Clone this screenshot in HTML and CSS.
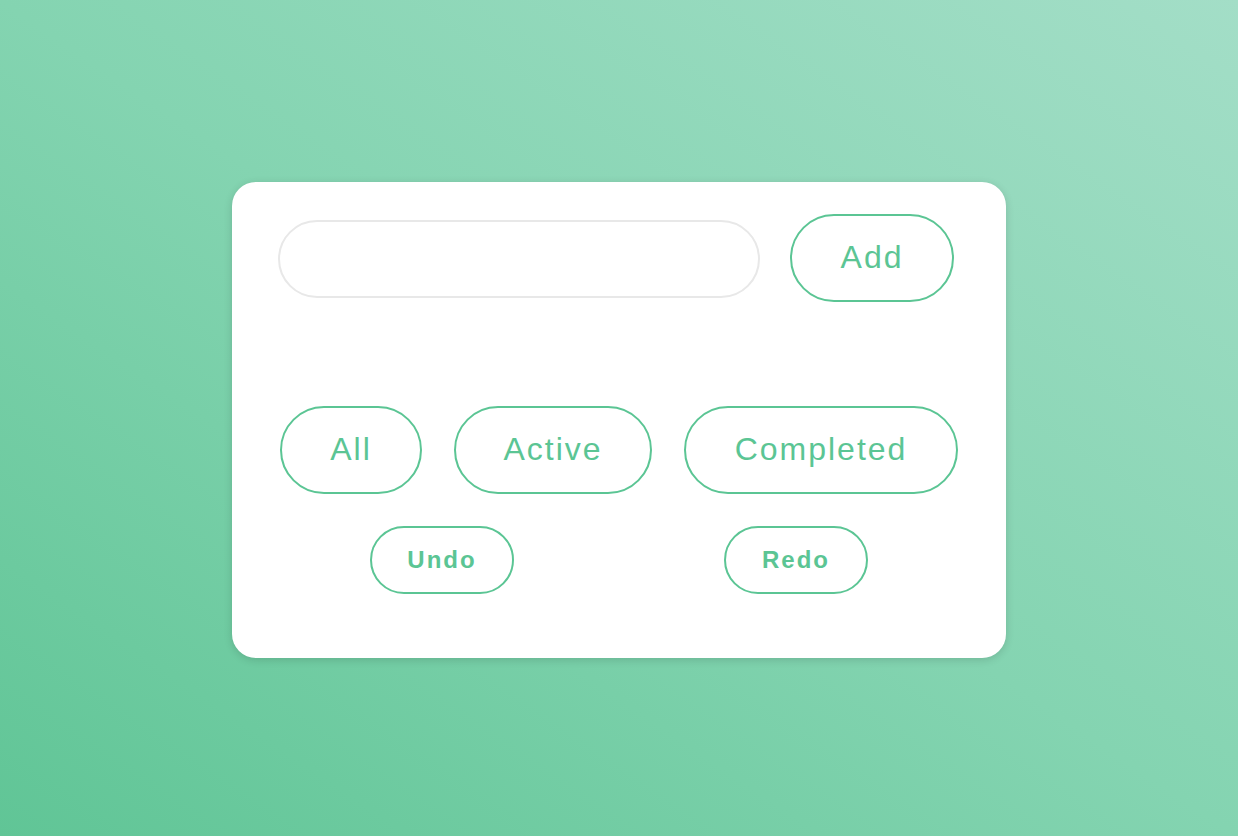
FILE: index.html
```html
<!DOCTYPE html>
<html lang="en">
<head>
<meta charset="utf-8">
<title>Todo</title>
<link rel="stylesheet" href="styles.css">
</head>
<body>
<main class="page">
  <section class="card">
    <div class="add-row">
      <input class="todo-input" type="text" aria-label="New todo">
      <button class="pill pill-lg add-btn">Add</button>
    </div>
    <ul class="todo-list"></ul>
    <div class="filter-row">
      <button class="pill pill-lg filter-all">All</button>
      <button class="pill pill-lg filter-active">Active</button>
      <button class="pill pill-lg filter-completed">Completed</button>
    </div>
    <div class="history-row">
      <button class="pill pill-sm">Undo</button>
      <button class="pill pill-sm">Redo</button>
    </div>
  </section>
</main>
</body>
</html>
```
FILE: styles.css
```css
* { box-sizing: border-box; }
html, body { margin: 0; height: 100%; }
body {
  font-family: "Liberation Sans", Arial, Helvetica, sans-serif;
  background: linear-gradient(to top right, #60c596 0%, #84d4b1 50%, #a3dec7 100%);
}
.page {
  height: 836px;
  display: flex;
  align-items: flex-start;
  justify-content: center;
  padding-top: 182px;
}
.card {
  width: 774px;
  height: 476px;
  background: #fff;
  border-radius: 24px;
  box-shadow: 0 2px 8px rgba(0, 0, 0, 0.14);
  padding: 32px 48px 0 46px;
  display: flex;
  flex-direction: column;
}
.add-row {
  display: flex;
  align-items: center;
  gap: 30px;
}
.todo-input {
  width: 482px;
  height: 78px;
  margin-top: 2px;
  border: 2px solid #e8e8e8;
  border-radius: 39px;
  outline: none;
  padding: 0 30px;
  font: inherit;
  font-size: 28px;
}
.pill {
  background: #fff;
  border: 2px solid #5bc594;
  color: #5bc594;
  border-radius: 999px;
  font-family: "Liberation Sans", Arial, Helvetica, sans-serif;
  padding: 0;
  cursor: pointer;
}
.pill-lg {
  height: 88px;
  padding-bottom: 2px;
  font-size: 32px;
  letter-spacing: 2px;
}
.add-btn { width: 164px; }
.todo-list {
  list-style: none;
  margin: 0;
  padding: 0;
  height: 104px;
}
.filter-row {
  display: flex;
  gap: 32px;
  padding-left: 2px;
}
.filter-all { width: 142px; }
.filter-active { width: 198px; }
.filter-completed { width: 274px; }
.history-row {
  display: flex;
  justify-content: center;
  gap: 210px;
  margin-top: 32px;
  padding-left: 2px;
}
.pill-sm {
  width: 144px;
  height: 68px;
  font-size: 24px;
  font-weight: bold;
  letter-spacing: 2px;
}
```
